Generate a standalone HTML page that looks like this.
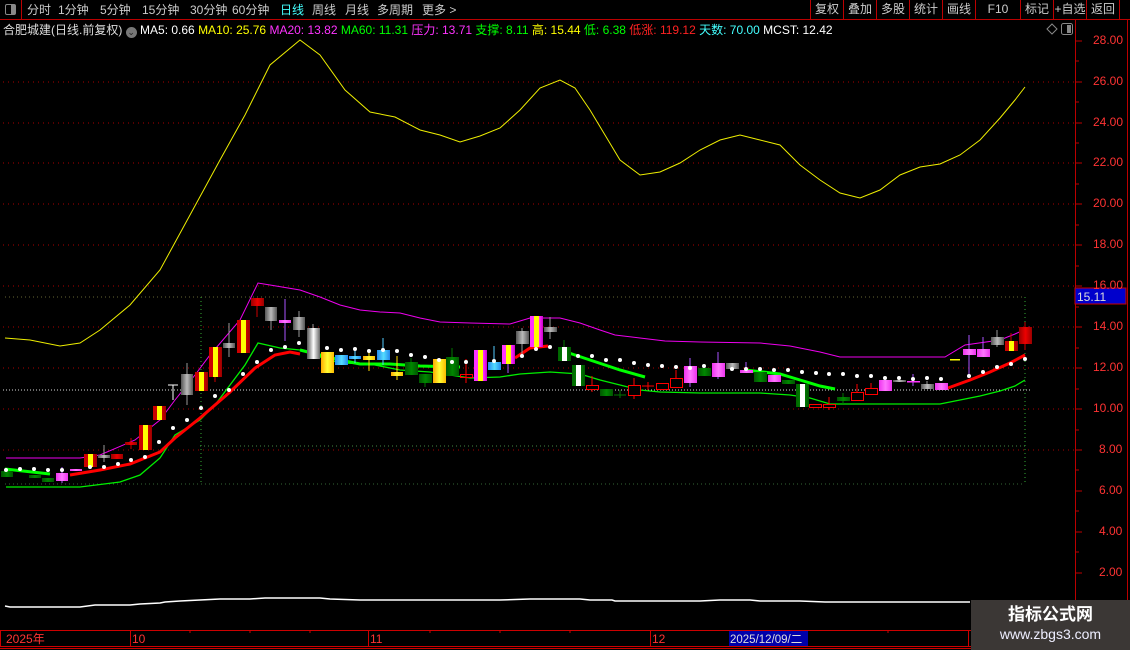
<!DOCTYPE html>
<html><head><meta charset="utf-8">
<style>
*{margin:0;padding:0}
body{width:1130px;height:650px;background:#000;overflow:hidden;position:relative;font-family:"Liberation Sans","Noto Sans CJK SC",sans-serif;}
.tb{position:absolute;top:0;left:0;width:1130px;height:19px;border-bottom:1px solid #b00;}
.tb span{position:absolute;top:1px;font-size:12px;color:#ccc;white-space:nowrap}
.rb{position:absolute;top:0;height:19px;border-left:1px solid #b00;color:#ccc;font-size:12px;text-align:center;line-height:19px}
.info{position:absolute;top:21px;left:3px;font-size:12px;white-space:nowrap;color:#ddd}
.info b{font-weight:normal}
.ax{position:absolute;left:1093px;font-size:12px;color:#f33}
</style></head><body>
<div class="tb">
<div style="position:absolute;left:0;top:0;width:21px;height:19px;border-right:1px solid #b00;"><div style="position:absolute;left:5px;top:4px;width:9px;height:9px;border:1px solid #888;border-radius:2px;"><div style="position:absolute;right:0;top:0;width:4px;height:9px;background:#888"></div></div></div>
<span style="left:27px">分时</span><span style="left:58px">1分钟</span><span style="left:100px">5分钟</span><span style="left:142px">15分钟</span><span style="left:190px">30分钟</span><span style="left:232px">60分钟</span><span style="left:280px;color:#4ff">日线</span><span style="left:312px">周线</span><span style="left:345px">月线</span><span style="left:377px">多周期</span><span style="left:422px">更多 &gt;</span>
<div class="rb" style="left:810px;width:32px">复权</div><div class="rb" style="left:843px;width:32px">叠加</div><div class="rb" style="left:876px;width:32px">多股</div><div class="rb" style="left:909px;width:32px">统计</div><div class="rb" style="left:942px;width:32px">画线</div><div class="rb" style="left:975px;width:44px">F10</div><div class="rb" style="left:1020px;width:32px">标记</div><div class="rb" style="left:1053px;width:32px">+自选</div><div class="rb" style="left:1086px;width:32px">返回</div><div class="rb" style="left:1119px;width:10px"></div>
</div>
<div class="info">合肥城建(日线.前复权) <span style="display:inline-block;width:11px;height:11px;border-radius:6px;background:#777;vertical-align:-1px;color:#222;font-size:9px;line-height:11px;text-align:center">⌄</span> <b style="color:#fff">MA5: 0.66</b> <b style="color:#ff0">MA10: 25.76</b> <b style="color:#f3f">MA20: 13.82</b> <b style="color:#0f0">MA60: 11.31</b> <b style="color:#f3f">压力: 13.71</b> <b style="color:#0f0">支撑: 8.11</b> <b style="color:#ff0">高: 15.44</b> <b style="color:#0f0">低: 6.38</b> <b style="color:#f22">低涨: 119.12</b> <b style="color:#4ff">天数: 70.00</b> <b style="color:#fff">MCST: 12.42</b></div>
<svg width="1130" height="650" style="position:absolute;left:0;top:0" xmlns="http://www.w3.org/2000/svg">
<defs>
<linearGradient id="ry"><stop offset="0" stop-color="#c00"/><stop offset=".3" stop-color="#c00"/><stop offset=".32" stop-color="#ff0"/><stop offset=".68" stop-color="#ff0"/><stop offset=".7" stop-color="#c00"/><stop offset="1" stop-color="#900"/></linearGradient>
<linearGradient id="py"><stop offset="0" stop-color="#f3f"/><stop offset=".3" stop-color="#f3f"/><stop offset=".32" stop-color="#ff0"/><stop offset=".68" stop-color="#ff0"/><stop offset=".7" stop-color="#f3f"/><stop offset="1" stop-color="#c0c"/></linearGradient>
<linearGradient id="gr"><stop offset="0" stop-color="#555"/><stop offset=".5" stop-color="#bbb"/><stop offset="1" stop-color="#555"/></linearGradient>
<linearGradient id="wg"><stop offset="0" stop-color="#060"/><stop offset=".3" stop-color="#070"/><stop offset=".32" stop-color="#fff"/><stop offset=".68" stop-color="#fff"/><stop offset=".7" stop-color="#070"/><stop offset="1" stop-color="#050"/></linearGradient>
<linearGradient id="ww"><stop offset="0" stop-color="#555"/><stop offset=".5" stop-color="#fff"/><stop offset="1" stop-color="#666"/></linearGradient>
<linearGradient id="pk"><stop offset="0" stop-color="#e3e"/><stop offset=".5" stop-color="#f7f"/><stop offset="1" stop-color="#e3e"/></linearGradient>
<linearGradient id="bl"><stop offset="0" stop-color="#28e"/><stop offset=".5" stop-color="#5df"/><stop offset="1" stop-color="#28e"/></linearGradient>
<linearGradient id="or"><stop offset="0" stop-color="#fa0"/><stop offset=".5" stop-color="#ff3"/><stop offset="1" stop-color="#fb0"/></linearGradient>
<linearGradient id="dg"><stop offset="0" stop-color="#050"/><stop offset=".5" stop-color="#080"/><stop offset="1" stop-color="#050"/></linearGradient>
<linearGradient id="rd"><stop offset="0" stop-color="#900"/><stop offset=".5" stop-color="#e00"/><stop offset="1" stop-color="#900"/></linearGradient>
</defs>
<g stroke="#a00" stroke-dasharray="1 4" stroke-width="1">
<line x1="3" y1="82" x2="1075" y2="82"/><line x1="3" y1="123" x2="1075" y2="123"/><line x1="3" y1="163" x2="1075" y2="163"/><line x1="3" y1="204" x2="1075" y2="204"/><line x1="3" y1="245" x2="1075" y2="245"/><line x1="3" y1="286" x2="1075" y2="286"/><line x1="3" y1="327" x2="1075" y2="327"/><line x1="3" y1="368" x2="1075" y2="368"/><line x1="3" y1="409" x2="1075" y2="409"/><line x1="3" y1="450" x2="1075" y2="450"/>
</g>
<g stroke="#777" stroke-dasharray="1 3">
<line x1="5" y1="297" x2="1025" y2="297" stroke="#663"/><line x1="200" y1="446" x2="1025" y2="446" stroke="#484"/><line x1="5" y1="484" x2="1025" y2="484" stroke="#363"/>
<line x1="201" y1="297" x2="201" y2="484" stroke="#3a3"/><line x1="1025" y1="297" x2="1025" y2="484" stroke="#3a3"/>
</g>
<line x1="3" y1="390" x2="1030" y2="390" stroke="#ddd" stroke-dasharray="1 2"/>
<polyline fill="none" stroke="#ee0" stroke-width="1" points="5,338 30,340 60,346 80,343 100,330 130,305 160,270 190,215 220,160 245,115 270,65 300,40 320,55 345,90 370,112 395,117 420,130 440,135 460,142 480,136 500,128 520,110 540,88 560,80 575,88 590,110 605,135 620,160 640,175 660,172 680,163 700,150 720,140 740,135 760,140 780,145 800,165 820,180 840,193 860,198 880,190 900,175 920,167 940,164 960,155 980,140 1000,118 1015,100 1025,87"/>
<polyline fill="none" stroke="#e0e" stroke-width="1" points="6,458 80,458 100,455 135,440 160,420 175,400 195,375 210,355 240,320 258,283 270,285 300,290 320,297 340,305 360,310 380,312 400,313 420,318 440,322 470,323 510,324 530,318 560,318 580,323 600,330 615,335 640,338 665,341 700,342 760,343 790,346 820,352 840,357 945,357 965,345 1000,340 1015,334 1030,327"/>
<polyline fill="none" stroke="#0e0" stroke-width="1.3" points="6,487 80,487 120,482 140,475 160,458 175,435 200,420 215,405 230,385 245,365 258,343 280,348 300,350 320,357 340,363 370,364 400,370 430,372 470,378 500,377 520,374 550,372 580,374 600,380 620,385 640,390 660,392 700,393 760,393 790,395 810,398 830,404 880,404 940,404 960,400 980,396 1000,391 1015,386 1025,380"/>
<g fill="none" stroke="#0f0" stroke-width="3">
<polyline points="5,469 50,474"/><polyline points="300,350 320,355 340,360 360,364 390,364 420,366 460,367"/><polyline points="560,350 590,360 620,370 645,377"/><polyline points="745,370 780,374 800,380 820,386 835,389"/><polyline points="1100,370 1100,370"/>
</g>
<g fill="none" stroke="#f00" stroke-width="3">
<polyline points="70,475 100,470 130,464 160,452 175,438 200,418 230,392 255,368 275,355 290,352 300,354"/>
<polyline points="515,358 530,348 548,346"/><polyline points="948,388 970,380 990,372 1010,363 1025,355"/>
</g>
<g id="c">
<!-- candles -->
<rect x="1" y="471" width="12" height="6" fill="url(#dg)"/>
<rect x="29" y="475" width="12" height="3" fill="url(#dg)"/>
<rect x="42" y="478" width="12" height="4" fill="url(#dg)"/>
<line x1="62" y1="467" x2="62" y2="483" stroke="#a5f"/><rect x="56" y="473" width="12" height="8" fill="url(#pk)"/>
<rect x="70" y="469" width="12" height="2" fill="url(#pk)"/>
<rect x="84" y="454" width="13" height="13" fill="url(#ry)"/>
<line x1="104" y1="445" x2="104" y2="462" stroke="#999"/><rect x="98" y="455" width="12" height="3" fill="url(#gr)"/>
<rect x="111" y="454" width="12" height="5" fill="url(#rd)"/>
<line x1="131" y1="438" x2="131" y2="449" stroke="#c00"/><rect x="125" y="442" width="12" height="3" fill="url(#rd)"/>
<rect x="139" y="425" width="13" height="25" fill="url(#ry)"/>
<rect x="153" y="406" width="13" height="14" fill="url(#ry)"/>
<line x1="173" y1="385" x2="173" y2="400" stroke="#fff"/><line x1="168" y1="385" x2="178" y2="385" stroke="#fff"/>
<line x1="187" y1="363" x2="187" y2="405" stroke="#999"/><rect x="181" y="374" width="12" height="21" fill="url(#gr)"/>
<rect x="195" y="372" width="13" height="19" fill="url(#ry)"/>
<line x1="215" y1="372" x2="215" y2="382" stroke="#c00"/><rect x="209" y="347" width="13" height="30" fill="url(#ry)"/>
<line x1="229" y1="323" x2="229" y2="357" stroke="#999"/><rect x="223" y="343" width="12" height="5" fill="url(#gr)"/>
<rect x="237" y="320" width="13" height="33" fill="url(#ry)"/>
<line x1="257" y1="298" x2="257" y2="317" stroke="#c00"/><rect x="251" y="298" width="13" height="8" fill="url(#rd)"/>
<line x1="271" y1="307" x2="271" y2="330" stroke="#999"/><rect x="265" y="307" width="12" height="14" fill="url(#gr)"/>
<line x1="285" y1="299" x2="285" y2="341" stroke="#a5f"/><rect x="279" y="320" width="12" height="3" fill="url(#pk)"/>
<line x1="299" y1="311" x2="299" y2="337" stroke="#999"/><rect x="293" y="317" width="12" height="13" fill="url(#gr)"/>
<line x1="313" y1="324" x2="313" y2="330" stroke="#999"/><rect x="307" y="328" width="13" height="31" fill="url(#ww)"/>
<rect x="321" y="352" width="13" height="21" fill="url(#or)"/>
<rect x="335" y="355" width="13" height="10" fill="url(#bl)"/>
<line x1="355" y1="350" x2="355" y2="363" stroke="#5cf"/><rect x="349" y="356" width="12" height="3" fill="url(#bl)"/>
<line x1="369" y1="352" x2="369" y2="371" stroke="#fd0"/><rect x="363" y="356" width="12" height="4" fill="url(#or)"/>
<line x1="383" y1="338" x2="383" y2="365" stroke="#5cf"/><rect x="377" y="350" width="13" height="10" fill="url(#bl)"/>
<line x1="397" y1="356" x2="397" y2="380" stroke="#fd0"/><rect x="391" y="372" width="12" height="4" fill="url(#or)"/>
<line x1="411" y1="358" x2="411" y2="375" stroke="#070"/><rect x="405" y="362" width="13" height="13" fill="url(#dg)"/>
<line x1="425" y1="374" x2="425" y2="387" stroke="#070"/><rect x="419" y="374" width="13" height="9" fill="url(#dg)"/>
<rect x="433" y="359" width="13" height="24" fill="url(#or)"/>
<line x1="452" y1="348" x2="452" y2="376" stroke="#070"/><rect x="446" y="357" width="13" height="19" fill="url(#dg)"/>
<line x1="466" y1="359" x2="466" y2="383" stroke="#f00"/><rect x="460.5" y="374.5" width="12" height="3" fill="none" stroke="#f00"/>
<rect x="474" y="350" width="13" height="31" fill="url(#py)"/>
<line x1="494" y1="346" x2="494" y2="370" stroke="#5cf"/><rect x="488" y="362" width="13" height="8" fill="url(#bl)"/>
<line x1="508" y1="364" x2="508" y2="373" stroke="#a5f"/><rect x="502" y="345" width="13" height="19" fill="url(#py)"/>
<line x1="522" y1="328" x2="522" y2="356" stroke="#999"/><rect x="516" y="331" width="13" height="13" fill="url(#gr)"/>
<rect x="530" y="316" width="13" height="31" fill="url(#py)"/>
<line x1="550" y1="317" x2="550" y2="339" stroke="#999"/><rect x="544" y="327" width="13" height="5" fill="url(#gr)"/>
<line x1="564" y1="340" x2="564" y2="347" stroke="#070"/><rect x="558" y="347" width="13" height="14" fill="url(#wg)"/>
<rect x="572" y="365" width="13" height="21" fill="url(#wg)"/>
<line x1="592" y1="376" x2="592" y2="392" stroke="#f00"/><rect x="586.5" y="385.5" width="12" height="4" fill="#000" stroke="#f00"/>
<rect x="600" y="389" width="13" height="7" fill="url(#dg)"/>
<line x1="620" y1="390" x2="620" y2="398" stroke="#070"/><line x1="614" y1="395" x2="626" y2="395" stroke="#070"/>
<line x1="634" y1="378" x2="634" y2="399" stroke="#f00"/><rect x="628.5" y="385.5" width="12" height="10" fill="#000" stroke="#f00"/>
<line x1="648" y1="382" x2="648" y2="390" stroke="#f00"/><line x1="642" y1="386" x2="654" y2="386" stroke="#f00"/>
<rect x="656.5" y="383.5" width="12" height="6" fill="#000" stroke="#f00"/>
<line x1="676" y1="370" x2="676" y2="378" stroke="#f00"/><rect x="670.5" y="378.5" width="12" height="9" fill="#000" stroke="#f00"/>
<line x1="690" y1="358" x2="690" y2="387" stroke="#a5f"/><rect x="684" y="366" width="13" height="17" fill="url(#pk)"/>
<line x1="704" y1="364" x2="704" y2="376" stroke="#070"/><rect x="698" y="368" width="13" height="8" fill="url(#dg)"/>
<line x1="718" y1="352" x2="718" y2="379" stroke="#a5f"/><rect x="712" y="363" width="13" height="14" fill="url(#pk)"/>
<rect x="726" y="363" width="13" height="6" fill="url(#gr)"/>
<line x1="746" y1="362" x2="746" y2="373" stroke="#a5f"/><rect x="740" y="370" width="13" height="3" fill="url(#pk)"/>
<rect x="754" y="372" width="13" height="10" fill="url(#dg)"/>
<rect x="768" y="375" width="13" height="7" fill="url(#pk)"/>
<rect x="782" y="380" width="13" height="4" fill="url(#dg)"/>
<rect x="796" y="384" width="13" height="23" fill="url(#wg)"/>
<rect x="809.5" y="404.5" width="12" height="3" fill="#000" stroke="#f00"/>
<line x1="829" y1="397" x2="829" y2="410" stroke="#f00"/><rect x="823.5" y="404.5" width="12" height="3" fill="#000" stroke="#f00"/>
<line x1="843" y1="393" x2="843" y2="404" stroke="#070"/><rect x="837" y="397" width="13" height="4" fill="url(#dg)"/>
<line x1="857" y1="384" x2="857" y2="392" stroke="#f00"/><rect x="851.5" y="392.5" width="12" height="8" fill="#000" stroke="#f00"/>
<line x1="871" y1="383" x2="871" y2="388" stroke="#f00"/><rect x="865.5" y="388.5" width="12" height="6" fill="#000" stroke="#f00"/>
<rect x="879" y="380" width="13" height="11" fill="url(#pk)"/>
<rect x="893" y="380" width="13" height="2" fill="url(#gr)"/>
<line x1="913" y1="374" x2="913" y2="386" stroke="#a5f"/><rect x="907" y="381" width="13" height="1.5" fill="#f3f"/>
<line x1="927" y1="381" x2="927" y2="389" stroke="#999"/><rect x="921" y="384" width="13" height="5" fill="url(#gr)"/>
<rect x="935" y="383" width="13" height="7" fill="url(#pk)"/>
<rect x="950" y="359" width="10" height="1.5" fill="#ff0"/>
<line x1="969" y1="335" x2="969" y2="377" stroke="#a5f"/><rect x="963" y="349" width="13" height="6" fill="url(#pk)"/>
<line x1="983" y1="337" x2="983" y2="349" stroke="#a5f"/><rect x="977" y="349" width="13" height="8" fill="url(#pk)"/>
<line x1="997" y1="330" x2="997" y2="347" stroke="#999"/><rect x="991" y="337" width="13" height="8" fill="url(#gr)"/>
<line x1="1011" y1="333" x2="1011" y2="341" stroke="#c00"/><rect x="1005" y="341" width="13" height="10" fill="url(#ry)"/>
<line x1="1025" y1="322" x2="1025" y2="350" stroke="#c00"/><rect x="1019" y="327" width="13" height="17" fill="url(#rd)"/>
</g>
<g fill="#fff">
<circle cx="6" cy="470" r="2"/><circle cx="20" cy="469" r="2"/><circle cx="34" cy="469" r="2"/><circle cx="48" cy="470" r="2"/><circle cx="62" cy="470" r="2"/><circle cx="90" cy="467" r="2"/><circle cx="104" cy="467" r="2"/><circle cx="118" cy="464" r="2"/><circle cx="131" cy="460" r="2"/><circle cx="145" cy="457" r="2"/><circle cx="159" cy="442" r="2"/><circle cx="173" cy="428" r="2"/><circle cx="187" cy="420" r="2"/><circle cx="201" cy="408" r="2"/><circle cx="215" cy="396" r="2"/><circle cx="229" cy="390" r="2"/><circle cx="243" cy="374" r="2"/><circle cx="257" cy="362" r="2"/><circle cx="271" cy="350" r="2"/><circle cx="285" cy="347" r="2"/><circle cx="299" cy="343" r="2"/><circle cx="327" cy="348" r="2"/><circle cx="341" cy="350" r="2"/><circle cx="355" cy="349" r="2"/><circle cx="369" cy="351" r="2"/><circle cx="383" cy="350" r="2"/><circle cx="397" cy="351" r="2"/><circle cx="411" cy="355" r="2"/><circle cx="425" cy="357" r="2"/><circle cx="439" cy="360" r="2"/><circle cx="452" cy="362" r="2"/><circle cx="466" cy="362" r="2"/><circle cx="494" cy="361" r="2"/><circle cx="522" cy="356" r="2"/><circle cx="536" cy="349" r="2"/><circle cx="550" cy="347" r="2"/><circle cx="578" cy="356" r="2"/><circle cx="592" cy="356" r="2"/><circle cx="606" cy="360" r="2"/><circle cx="620" cy="360" r="2"/><circle cx="634" cy="363" r="2"/><circle cx="648" cy="365" r="2"/><circle cx="662" cy="366" r="2"/><circle cx="676" cy="367" r="2"/><circle cx="690" cy="368" r="2"/><circle cx="704" cy="366" r="2"/><circle cx="732" cy="369" r="2"/><circle cx="746" cy="369" r="2"/><circle cx="760" cy="369" r="2"/><circle cx="774" cy="370" r="2"/><circle cx="788" cy="370" r="2"/><circle cx="802" cy="372" r="2"/><circle cx="816" cy="373" r="2"/><circle cx="829" cy="374" r="2"/><circle cx="843" cy="374" r="2"/><circle cx="857" cy="376" r="2"/><circle cx="871" cy="376" r="2"/><circle cx="885" cy="378" r="2"/><circle cx="899" cy="378" r="2"/><circle cx="913" cy="379" r="2"/><circle cx="927" cy="378" r="2"/><circle cx="941" cy="379" r="2"/><circle cx="969" cy="376" r="2"/><circle cx="983" cy="372" r="2"/><circle cx="997" cy="367" r="2"/><circle cx="1011" cy="364" r="2"/><circle cx="1025" cy="359" r="2"/>
</g>
<polyline fill="none" stroke="#fff" stroke-width="1.5" points="5,606 10,607 80,607 95,605 130,605 140,604 160,603 165,602 180,601 200,600 220,599 250,599 265,598 320,598 330,599 360,600 500,600 530,599 580,599 590,600 612,600 615,601 700,601 720,600 750,600 760,601 800,601 825,602 970,602"/>
<!-- right axis -->
<line x1="1075.5" y1="20" x2="1075.5" y2="650" stroke="#b00"/>
<line x1="1127.5" y1="20" x2="1127.5" y2="600" stroke="#b00"/>
<g stroke="#b00">
<line x1="1075" y1="41" x2="1082" y2="41"/><line x1="1075" y1="82" x2="1082" y2="82"/><line x1="1075" y1="123" x2="1082" y2="123"/><line x1="1075" y1="163" x2="1082" y2="163"/><line x1="1075" y1="204" x2="1082" y2="204"/><line x1="1075" y1="245" x2="1082" y2="245"/><line x1="1075" y1="286" x2="1082" y2="286"/><line x1="1075" y1="327" x2="1082" y2="327"/><line x1="1075" y1="368" x2="1082" y2="368"/><line x1="1075" y1="409" x2="1082" y2="409"/><line x1="1075" y1="450" x2="1082" y2="450"/><line x1="1075" y1="491" x2="1082" y2="491"/><line x1="1075" y1="532" x2="1082" y2="532"/><line x1="1075" y1="573" x2="1082" y2="573"/>
<line x1="1075" y1="61" x2="1079" y2="61"/><line x1="1075" y1="102" x2="1079" y2="102"/><line x1="1075" y1="143" x2="1079" y2="143"/><line x1="1075" y1="184" x2="1079" y2="184"/><line x1="1075" y1="225" x2="1079" y2="225"/><line x1="1075" y1="266" x2="1079" y2="266"/><line x1="1075" y1="307" x2="1079" y2="307"/><line x1="1075" y1="348" x2="1079" y2="348"/><line x1="1075" y1="389" x2="1079" y2="389"/><line x1="1075" y1="430" x2="1079" y2="430"/><line x1="1075" y1="470" x2="1079" y2="470"/><line x1="1075" y1="511" x2="1079" y2="511"/><line x1="1075" y1="552" x2="1079" y2="552"/>
</g>
<!-- date axis -->
<rect x="0.5" y="630.5" width="1075" height="16" fill="none" stroke="#c00"/>
<line x1="130.5" y1="630" x2="130.5" y2="646" stroke="#c00"/><line x1="368.5" y1="630" x2="368.5" y2="646" stroke="#c00"/><line x1="650.5" y1="630" x2="650.5" y2="646" stroke="#c00"/><line x1="968.5" y1="630" x2="968.5" y2="646" stroke="#c00"/>
<g stroke="#c00"><line x1="190" y1="630" x2="190" y2="633"/><line x1="250" y1="630" x2="250" y2="633"/><line x1="310" y1="630" x2="310" y2="633"/><line x1="430" y1="630" x2="430" y2="633"/><line x1="500" y1="630" x2="500" y2="633"/><line x1="570" y1="630" x2="570" y2="633"/><line x1="888" y1="630" x2="888" y2="633"/></g>
<rect x="729" y="631" width="79" height="15" fill="#00a"/>
<g font-family="Liberation Sans, Noto Sans CJK SC, sans-serif" font-size="12" fill="#f33"><text x="6" y="643">2025年</text><text x="132" y="643">10</text><text x="370" y="643">11</text><text x="652" y="643">12</text><text x="730" y="643" fill="#ddd" font-size="11.5">2025/12/09/二</text></g>
<line x1="0" y1="648.5" x2="1075" y2="648.5" stroke="#c00"/>
<rect x="1075" y="288" width="51" height="16" fill="#00c" stroke="#c00"/>
<text x="1077" y="301" font-family="Liberation Sans, sans-serif" font-size="12" fill="#ddd">15.11</text>
<path d="M1047 29 L1052 24 L1057 29 L1052 34 Z" fill="none" stroke="#888"/>
<rect x="1061.5" y="23.5" width="11" height="11" rx="2" fill="none" stroke="#888"/><rect x="1067" y="25" width="4" height="8" fill="#888"/>
</svg>
<div class="ax" style="top:33px">28.00</div><div class="ax" style="top:74px">26.00</div><div class="ax" style="top:115px">24.00</div><div class="ax" style="top:155px">22.00</div><div class="ax" style="top:196px">20.00</div><div class="ax" style="top:237px">18.00</div><div class="ax" style="top:278px">16.00</div><div class="ax" style="top:319px">14.00</div><div class="ax" style="top:360px">12.00</div><div class="ax" style="top:401px">10.00</div><div class="ax" style="top:442px;left:1099px">8.00</div><div class="ax" style="top:483px;left:1099px">6.00</div><div class="ax" style="top:524px;left:1099px">4.00</div><div class="ax" style="top:565px;left:1099px">2.00</div>
<div style="position:absolute;left:971px;top:600px;width:159px;height:50px;background:#3b3735;text-align:center;color:#fff">
<div style="font-size:17px;font-weight:bold;margin-top:5px;line-height:20px">指标公式网</div>
<div style="font-size:14px;line-height:18px;color:#eef">www.zbgs3.com</div></div>
</body></html>
